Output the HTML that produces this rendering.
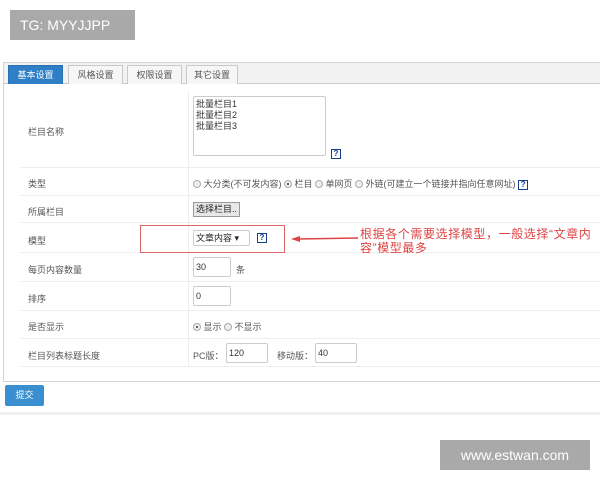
<!DOCTYPE html>
<html><head><meta charset="utf-8"><style>
*{margin:0;padding:0;box-sizing:border-box}
body{width:600px;height:480px;background:#fff;position:relative;overflow:hidden;font-family:"Liberation Sans","Noto Sans CJK SC",sans-serif;font-size:9px;color:#555}
.a{position:absolute}
.tg{left:10px;top:10px;width:125px;height:30px;background:#a9a9a9;color:#fff;font-size:14px;line-height:30px;padding-left:10px}
.wm{left:440px;top:440px;width:150px;height:30px;background:#a9a9a9;color:#fff;font-size:14px;line-height:30px;text-align:center}
.panel{left:3px;top:62px;width:597px;height:320px;border:1px solid #d4d4d4;border-right:none;background:#fff}
.tabbar{left:4px;top:63px;width:596px;height:21px;background:#f2f2f2;border-bottom:1px solid #c9c9c9}
.tab{top:65px;height:19px;border:1px solid #c9c9c9;border-bottom:none;background:#f6f6f6;line-height:18px;text-align:center;color:#555}
.tab.on{background:#2e7fc6;color:#fff;border-color:#2a6fb0}
.row{left:20px;width:580px;border-bottom:1px solid #eee}
.lbl{left:28px}
.vline{left:188px;top:91px;width:1px;height:276px;background:#eee}
.inp{border:1px solid #ccc;border-radius:2px;background:#fff;color:#333;padding-left:2px}
.rad{display:inline-block;width:8px;height:8px;border-radius:50%;border:1px solid #aaa;background:#eee;vertical-align:-1px;position:relative}
.rad.on::after{content:"";position:absolute;left:2px;top:2px;width:2px;height:2px;border-radius:50%;background:#333}
.q{display:inline-block;width:10px;height:10px;border:1px solid #1a3d8f;color:#1a3d8f;font-size:8px;line-height:8px;text-align:center;font-weight:bold;background:#fff}
.btn{border:1px solid #999;background:#e8e8e8;color:#222;padding:0 2px}
</style></head><body>
<div class="a tg">TG: MYYJJPP</div>
<div class="a panel"></div>
<div class="a tabbar"></div>
<div class="a tab on" style="left:8px;width:55px">基本设置</div>
<div class="a tab" style="left:68px;width:55px">风格设置</div>
<div class="a tab" style="left:127px;width:55px">权限设置</div>
<div class="a tab" style="left:186px;width:52px">其它设置</div>
<div class="a vline"></div>
<div class="a row" style="top:91px;height:77px"></div>
<div class="a lbl" style="top:125px">栏目名称</div>
<div class="a inp" style="left:193px;top:96px;width:133px;height:60px;line-height:11px;padding-top:2px">批量栏目1<br>批量栏目2<br>批量栏目3</div>
<div class="a q" style="left:331px;top:149px">?</div>
<div class="a row" style="top:168px;height:28px"></div>
<div class="a lbl" style="top:177px">类型</div>
<div class="a" style="left:193px;top:177px"><span class="rad"></span> 大分类(不可发内容) <span class="rad on"></span> 栏目 <span class="rad"></span> 单网页 <span class="rad"></span> 外链(可建立一个链接并指向任意网址) <span class="q">?</span></div>
<div class="a row" style="top:196px;height:27px"></div>
<div class="a lbl" style="top:205px">所属栏目</div>
<div class="a btn" style="left:193px;top:202px;height:15px;line-height:13px">选择栏目..</div>
<div class="a row" style="top:223px;height:30px"></div>
<div class="a lbl" style="top:234px">模型</div>
<div class="a" style="left:140px;top:225px;width:145px;height:28px;border:1px solid #d66"></div>
<div class="a inp" style="left:193px;top:230px;width:57px;height:16px;line-height:14px;color:#222">文章内容 ▾</div>
<div class="a q" style="left:257px;top:233px">?</div>
<svg class="a" style="left:290px;top:235px" width="70" height="8"><line x1="8" y1="4" x2="68" y2="3" stroke="#d44" stroke-width="1.5"/><path d="M1 4 L10 1 L10 7Z" fill="#d44"/></svg>
<div class="a" style="left:360px;top:227px;width:240px;color:#d44;font-size:12px;line-height:14px;letter-spacing:0.6px">根据各个需要选择模型，一般选择“文章内容”模型最多</div>
<div class="a row" style="top:253px;height:29px"></div>
<div class="a lbl" style="top:263px">每页内容数量</div>
<div class="a inp" style="left:193px;top:257px;width:38px;height:20px;line-height:18px">30</div>
<div class="a" style="left:236px;top:263px">条</div>
<div class="a row" style="top:282px;height:29px"></div>
<div class="a lbl" style="top:292px">排序</div>
<div class="a inp" style="left:193px;top:286px;width:38px;height:20px;line-height:18px">0</div>
<div class="a row" style="top:311px;height:28px"></div>
<div class="a lbl" style="top:320px">是否显示</div>
<div class="a" style="left:193px;top:320px"><span class="rad on"></span> 显示 <span class="rad"></span> 不显示</div>
<div class="a row" style="top:339px;height:28px"></div>
<div class="a lbl" style="top:349px">栏目列表标题长度</div>
<div class="a" style="left:193px;top:349px">PC版：</div>
<div class="a inp" style="left:226px;top:343px;width:42px;height:20px;line-height:18px">120</div>
<div class="a" style="left:277px;top:349px">移动版：</div>
<div class="a inp" style="left:315px;top:343px;width:42px;height:20px;line-height:18px">40</div>
<div class="a" style="left:0;top:382px;width:600px;height:33px;background:#fff;border-bottom:3px solid #f0f0f0"></div>
<div class="a" style="left:5px;top:385px;width:39px;height:21px;background:#3a8fd0;border-radius:2px;color:#fff;line-height:21px;text-align:center">提交</div>
<div class="a wm">www.estwan.com</div>
</body></html>
